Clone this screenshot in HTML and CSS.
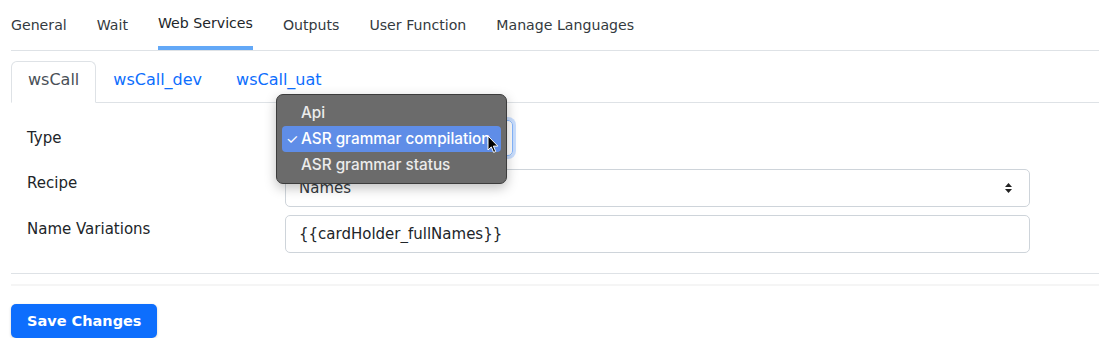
FILE: index.html
```html
<!DOCTYPE html>
<html lang="en">
<head>
    <meta charset="UTF-8">
    <meta name="viewport" content="width=device-width, initial-scale=1.0">
    <title>Web Services</title>
    <link rel="stylesheet" href="styles.css">
</head>
<body>
    <div class="page">
        <!-- Main tabs -->
        <nav class="main-tabs">
            <a class="main-tab">General</a>
            <a class="main-tab">Wait</a>
            <a class="main-tab active">Web Services</a>
            <a class="main-tab">Outputs</a>
            <a class="main-tab">User Function</a>
            <a class="main-tab">Manage Languages</a>
        </nav>

        <!-- Call tabs -->
        <ul class="sub-tabs">
            <li class="sub-tab active">wsCall</li>
            <li class="sub-tab">wsCall_dev</li>
            <li class="sub-tab">wsCall_uat</li>
        </ul>

        <form class="ws-form">
            <div class="form-row row-type">
                <label class="form-label">Type</label>
                <div class="select-wrap">
                    <div class="select select-type focused"></div>

                    <!-- Open dropdown menu -->
                    <div class="dropdown-menu">
                        <div class="dropdown-item">Api</div>
                        <div class="dropdown-item selected"><span class="check">✓</span>ASR grammar compilation</div>
                        <div class="dropdown-item">ASR grammar status</div>
                    </div>
                    <svg class="cursor" width="12" height="19" viewBox="0 0 12 19">
                        <path d="M1 1 L1 15 L4.3 11.9 L6.6 17.4 L8.7 16.5 L6.4 11.1 L10.8 11.1 Z" fill="#000" stroke="#fff" stroke-width="1" stroke-linejoin="round"/>
                    </svg>
                </div>
            </div>

            <div class="form-row">
                <label class="form-label">Recipe</label>
                <div class="select select-full">
                    <span>Names</span>
                    <svg class="select-arrows" width="9" height="12" viewBox="0 0 9 12">
                        <path d="M4.5 1 L8 5 L1 5 Z" fill="#222"/>
                        <path d="M4.5 11 L8 7 L1 7 Z" fill="#222"/>
                    </svg>
                </div>
            </div>

            <div class="form-row">
                <label class="form-label">Name Variations</label>
                <input class="text-input" type="text" value="{{cardHolder_fullNames}}">
            </div>
        </form>

        <div class="divider"></div>

        <button class="save-btn" type="button">Save Changes</button>
    </div>
</body>
</html>
```

FILE: styles.css
```css
body {
    margin: 0;
    background: #fff;
    font-family: "DejaVu Sans", sans-serif;
    color: #212529;
}

.page {
    padding-left: 11px;
}

/* Main tabs */
.main-tabs {
    display: flex;
    gap: 30px;
    border-bottom: 1px solid #dee2e6;
}

.main-tab {
    box-sizing: border-box;
    height: 50px;
    display: flex;
    align-items: center;
    font-size: 14.15px;
    color: #343a40;
}

.main-tab.active {
    border-bottom: 4px solid #63a8f7;
    color: #212529;
}

/* Sub tabs */
.sub-tabs {
    display: flex;
    list-style: none;
    margin: 10px 0 0;
    padding: 0;
    border-bottom: 1px solid #dee2e6;
}

.sub-tab {
    margin-bottom: -1px;
    border: 1px solid transparent;
    border-radius: 6px 6px 0 0;
    padding: 6px 16px 10px;
    line-height: 24px;
    font-size: 16px;
    color: #0d6efd;
}

.sub-tab.active {
    color: #495057;
    background: #fff;
    border-color: #dee2e6 #dee2e6 #fff;
}

/* Form */
.ws-form {
    padding: 17px 0 20px 16px;
}

.form-row {
    display: grid;
    grid-template-columns: 258px 745px;
    align-items: start;
    margin-bottom: 8px;
}

.form-row:last-child {
    margin-bottom: 0;
}

.row-type {
    align-items: center;
    margin-bottom: 13px;
}

.form-label {
    font-size: 15px;
    line-height: 24px;
    padding-top: 2px;
}

.row-type .form-label {
    padding-top: 0;
}

.select-wrap {
    position: relative;
}

.select {
    box-sizing: border-box;
    height: 38px;
    display: flex;
    align-items: center;
    justify-content: space-between;
    padding: 0 14px 0 13px;
    border: 1px solid #ced4da;
    border-radius: 5px;
    font-size: 15px;
    color: #343a40;
}

.select-type {
    width: 228px;
    height: 36px;
}

.select.focused {
    border-color: #86b7fe;
    box-shadow: 0 0 0 3px rgba(13, 110, 253, 0.22);
}

.select-arrows {
    margin-right: 2px;
}

.text-input {
    box-sizing: border-box;
    height: 38px;
    width: 100%;
    padding: 0 13px;
    border: 1px solid #ced4da;
    border-radius: 5px;
    font-family: "DejaVu Sans", sans-serif;
    font-size: 15px;
    color: #212529;
}

/* Open dropdown */
.dropdown-menu {
    position: absolute;
    left: -9px;
    top: -26px;
    box-sizing: border-box;
    width: 231px;
    height: 90px;
    padding: 5px;
    background: #6b6b6b;
    border: 1px solid #3c3c3c;
    border-radius: 7px;
    box-shadow: 0 4px 12px rgba(0, 0, 0, 0.25);
    font-family: Inter, sans-serif;
    font-size: 15.3px;
    font-weight: 500;
    color: #ececec;
}

.dropdown-item {
    position: relative;
    height: 26px;
    line-height: 26px;
    padding-left: 19px;
    border-radius: 4px;
    white-space: nowrap;
    overflow: hidden;
}

.dropdown-item.selected {
    background: #5f8de7;
    color: #fff;
}

.check {
    position: absolute;
    left: 4px;
    font-size: 14px;
    font-weight: 400;
}

.cursor {
    position: absolute;
    left: 202px;
    top: 15px;
}

/* Footer */
.divider {
    height: 10px;
    border-top: 1px solid #dee2e6;
    border-bottom: 2px solid #f5f5f5;
}

.save-btn {
    margin-top: 18px;
    height: 34px;
    padding: 0 16px;
    border: none;
    border-radius: 5px;
    background: #0d6efd;
    color: #fff;
    font-family: "DejaVu Sans", sans-serif;
    font-size: 14.5px;
    font-weight: bold;
    box-shadow: 0 1px 3px rgba(0, 0, 0, 0.18);
}
```
